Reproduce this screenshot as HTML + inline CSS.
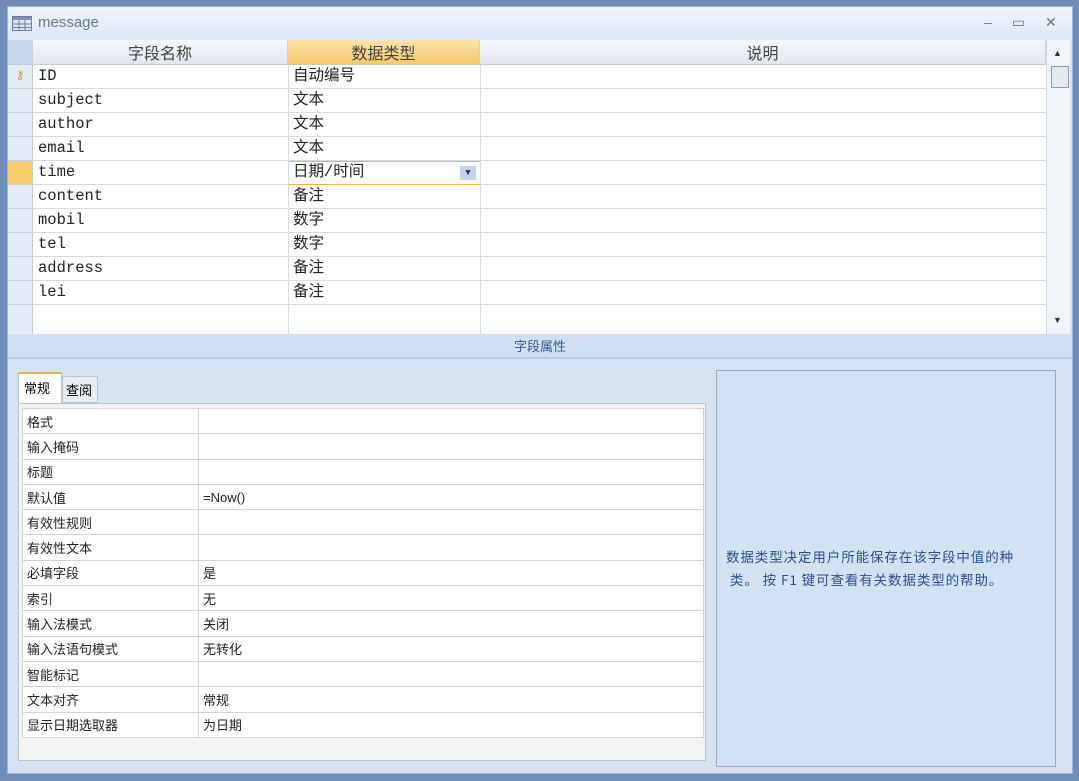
<!DOCTYPE html><html><head><meta charset="utf-8"><style>
*{margin:0;padding:0;box-sizing:border-box}
body{width:1079px;height:781px;background:#6f8cb8;position:relative;overflow:hidden;font-family:"Liberation Sans","Noto Sans CJK SC",sans-serif}
.a{position:absolute}
.win{left:7px;top:6px;width:1066px;height:768px;background:#d5e2f1;border:1px solid #9fb4d4}
.title{left:8px;top:7px;width:1064px;height:33px;background:linear-gradient(#eef4fb,#dce7f5);}
.grid{left:8px;top:40px;width:1062px;height:294px;background:#fff}
.hdr{top:0;height:25px;background:linear-gradient(#f6f8fb,#e0e6ee);border-right:1px solid #c8d2de;border-bottom:1px solid #c0cad6;font-size:16px;color:#444;text-align:center;line-height:25px;font-family:"Noto Sans CJK SC",sans-serif}
.row{height:24px;border-bottom:1px solid #d4dbe4;font-family:"Liberation Mono","Noto Sans CJK SC",monospace;font-size:15.5px;line-height:23px;color:#222;white-space:nowrap}
.sel{left:0;top:0;width:25px;background:#e3ebf5;border-right:1px solid #c0cad6;border-bottom:1px solid #c8d2de}
.pt td{height:25.3px;border-bottom:1px solid #cfd3d8;border-right:1px solid #cfd3d8;font-size:13px;color:#222;padding-left:4px;font-family:"Noto Sans CJK SC",sans-serif}
</style></head><body>
<div class="a win"></div>
<div class="a title"></div>
<svg class="a" style="left:12px;top:16px" width="20" height="16"><rect x="0.5" y="0.5" width="19" height="14" fill="#dde7f3" stroke="#6a7f9c"/><rect x="1" y="1" width="18" height="3" fill="#7e93b5"/><path d="M1 8h18M1 11.5h18M7 4v11M13 4v11" stroke="#6a7f9c"/></svg>
<div class="a" style="left:38px;top:14px;font-size:15px;color:#6a7a90">message</div>
<div class="a" style="left:984px;top:14px;font-size:14px;color:#777;letter-spacing:20px">–▭✕</div>
<div class="a grid">
 <div class="a hdr" style="left:0;width:25px;background:#c9d7ea"></div>
 <div class="a hdr" style="left:25px;width:255px">字段名称</div>
 <div class="a hdr" style="left:280px;width:192px;background:linear-gradient(#fbe3a8,#f8c868)">数据类型</div>
 <div class="a hdr" style="left:472px;width:566px">说明</div>
 <div class="a" style="left:1038px;top:0;width:24px;height:294px;background:#f0f3f7;border-left:1px solid #d0d8e2"></div>
 <div class="a" style="left:1045px;top:8px;font-size:9px;color:#333">▲</div>
 <div class="a" style="left:1043px;top:26px;width:18px;height:22px;border:1px solid #8a9bb2;background:#e4e9f0"></div>
 <div class="a" style="left:1045px;top:275px;font-size:9px;color:#333">▼</div>
 <div class="a" style="left:0;top:25px;width:1038px">
  <div class="row" style="position:relative"><div class="a sel" style="height:24px;color:#c9a020;font-size:12px;text-align:center">⚷</div><span class="a" style="left:30px">ID</span><span class="a" style="left:285px">自动编号</span></div>
  <div class="row" style="position:relative"><div class="a sel" style="height:24px"></div><span class="a" style="left:30px">subject</span><span class="a" style="left:285px">文本</span></div>
  <div class="row" style="position:relative"><div class="a sel" style="height:24px"></div><span class="a" style="left:30px">author</span><span class="a" style="left:285px">文本</span></div>
  <div class="row" style="position:relative"><div class="a sel" style="height:24px"></div><span class="a" style="left:30px">email</span><span class="a" style="left:285px">文本</span></div>
  <div class="row" style="position:relative"><div class="a sel" style="height:24px;background:#f9cc6e"></div><span class="a" style="left:30px">time</span><div class="a" style="left:280px;top:0;width:193px;height:24px;border:1px solid #f0b050"></div><span class="a" style="left:285px">日期/时间</span><div class="a" style="left:452px;top:5px;width:16px;height:14px;background:#c4d4ec;font-size:9px;text-align:center;line-height:14px;color:#334">▼</div></div>
  <div class="row" style="position:relative"><div class="a sel" style="height:24px"></div><span class="a" style="left:30px">content</span><span class="a" style="left:285px">备注</span></div>
  <div class="row" style="position:relative"><div class="a sel" style="height:24px"></div><span class="a" style="left:30px">mobil</span><span class="a" style="left:285px">数字</span></div>
  <div class="row" style="position:relative"><div class="a sel" style="height:24px"></div><span class="a" style="left:30px">tel</span><span class="a" style="left:285px">数字</span></div>
  <div class="row" style="position:relative"><div class="a sel" style="height:24px"></div><span class="a" style="left:30px">address</span><span class="a" style="left:285px">备注</span></div>
  <div class="row" style="position:relative"><div class="a sel" style="height:24px"></div><span class="a" style="left:30px">lei</span><span class="a" style="left:285px">备注</span></div>
  <div class="row" style="position:relative;height:29px;border:0"><div class="a sel" style="height:29px;border-bottom:0"></div></div>
 </div>
 <div class="a" style="left:280px;top:25px;width:1px;height:269px;background:#d4dbe4"></div>
 <div class="a" style="left:472px;top:25px;width:1px;height:269px;background:#d4dbe4"></div>
</div>
<div class="a" style="left:8px;top:334px;width:1064px;height:25px;background:#d1e0f1;border-bottom:2px solid #b9cce3;text-align:center;font-size:13px;line-height:24px;color:#3a5a90;font-family:'Noto Sans CJK SC',sans-serif">字段属性</div>
<div class="a" style="left:18px;top:372px;width:44px;height:32px;background:#fff;border:1px solid #b8c4d2;border-top:2px solid #f0b050;border-bottom:0;font-size:13px;padding:4px 0 0 5px;font-family:'Noto Sans CJK SC',sans-serif">常规</div>
<div class="a" style="left:62px;top:376px;width:36px;height:27px;background:#e8edf3;border:1px solid #b8c4d2;font-size:13px;padding:3px 0 0 3px;font-family:'Noto Sans CJK SC',sans-serif">查阅</div>
<div class="a" style="left:18px;top:403px;width:688px;height:358px;background:#f3f3f1;border:1px solid #b8c4d2"></div>
<table class="a pt" style="left:22px;top:408px;width:682px;border-collapse:collapse;background:#fff;border-left:1px solid #cfd3d8;border-top:1px solid #cfd3d8">
<tr><td style="width:176px">格式</td><td></td></tr>
<tr><td>输入掩码</td><td></td></tr>
<tr><td>标题</td><td></td></tr>
<tr><td>默认值</td><td style="font-family:'Liberation Sans',sans-serif">=Now()</td></tr>
<tr><td>有效性规则</td><td></td></tr>
<tr><td>有效性文本</td><td></td></tr>
<tr><td>必填字段</td><td>是</td></tr>
<tr><td>索引</td><td>无</td></tr>
<tr><td>输入法模式</td><td>关闭</td></tr>
<tr><td>输入法语句模式</td><td>无转化</td></tr>
<tr><td>智能标记</td><td></td></tr>
<tr><td>文本对齐</td><td>常规</td></tr>
<tr><td>显示日期选取器</td><td>为日期</td></tr>
</table>
<div class="a" style="left:716px;top:370px;width:340px;height:397px;background:#d2e2f2;border:1px solid #93a8c4"></div>
<div class="a" style="left:726px;top:545px;width:330px;font-size:13.5px;line-height:23px;color:#2c4f8c;font-family:'Noto Sans CJK SC',sans-serif;letter-spacing:0.9px;white-space:nowrap">数据类型决定用户所能保存在该字段中值的种<br>&nbsp;类。 按 F1 键可查看有关数据类型的帮助。</div>
</body></html>
